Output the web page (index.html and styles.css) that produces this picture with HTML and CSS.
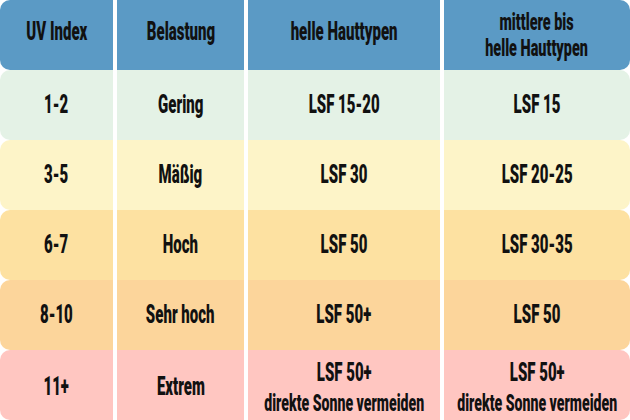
FILE: index.html
```html
<!DOCTYPE html>
<html lang="de">
<head>
<meta charset="utf-8">
<title>UV Index</title>
<link rel="stylesheet" href="styles.css">
</head>
<body>
<div class="table">
  <div class="cell head first"><span class="t">UV Index</span></div>
  <div class="cell head"><span class="t">Belastung</span></div>
  <div class="cell head"><span class="t">helle Hauttypen</span></div>
  <div class="cell head last"><span class="t two"><span class="line">mittlere bis</span><span class="line">helle Hauttypen</span></span></div>

  <div class="cell r1 first"><span class="t">1-2</span></div>
  <div class="cell r1"><span class="t">Gering</span></div>
  <div class="cell r1"><span class="t">LSF 15-20</span></div>
  <div class="cell r1 last"><span class="t">LSF 15</span></div>

  <div class="cell r2 first"><span class="t">3-5</span></div>
  <div class="cell r2"><span class="t">Mäßig</span></div>
  <div class="cell r2"><span class="t">LSF 30</span></div>
  <div class="cell r2 last"><span class="t">LSF 20-25</span></div>

  <div class="cell r3 first"><span class="t">6-7</span></div>
  <div class="cell r3"><span class="t">Hoch</span></div>
  <div class="cell r3"><span class="t">LSF 50</span></div>
  <div class="cell r3 last"><span class="t">LSF 30-35</span></div>

  <div class="cell r4 first"><span class="t">8-10</span></div>
  <div class="cell r4"><span class="t">Sehr hoch</span></div>
  <div class="cell r4"><span class="t">LSF 50+</span></div>
  <div class="cell r4 last"><span class="t">LSF 50</span></div>

  <div class="cell r5 first"><span class="t">11+</span></div>
  <div class="cell r5"><span class="t">Extrem</span></div>
  <div class="cell r5"><span class="t">LSF 50+<span class="note">direkte Sonne vermeiden</span></span></div>
  <div class="cell r5 last"><span class="t">LSF 50+<span class="note">direkte Sonne vermeiden</span></span></div>
</div>
</body>
</html>
```

FILE: styles.css
```css
html, body {
  margin: 0;
  padding: 0;
  background: #ffffff;
}

body {
  width: 630px;
  height: 420px;
  overflow: hidden;
  font-family: Roboto, "Liberation Sans", sans-serif;
  font-weight: 900;
  color: #111111;
}

.table {
  display: grid;
  grid-template-columns: 113px 127px 192px 186px;
  grid-auto-rows: 70px;
  column-gap: 4px;
}

.cell {
  display: flex;
  align-items: center;
  justify-content: center;
  text-align: center;
}

.first {
  border-radius: 10px 0 0 10px;
}

.last {
  border-radius: 0 10px 10px 0;
}

.t {
  display: inline-block;
  font-size: 25px;
  line-height: 28px;
  white-space: nowrap;
  transform: scaleX(0.6);
}

.head .t {
  margin-top: -6px;
}

.head .two {
  margin-top: 0;
  font-size: 24px;
  line-height: 26px;
}

.line {
  display: block;
}

.note {
  display: block;
  font-size: 23.5px;
  line-height: 26px;
  margin-top: 3px;
}

.r5 .t {
  margin-top: 4px;
}

.head { background: #5b9ac5; }
.r1 { background: #e4f2e6; }
.r2 { background: #fdf4c8; }
.r3 { background: #fde1a1; }
.r4 { background: #fcd59b; }
.r5 { background: #ffc6c1; }
```
